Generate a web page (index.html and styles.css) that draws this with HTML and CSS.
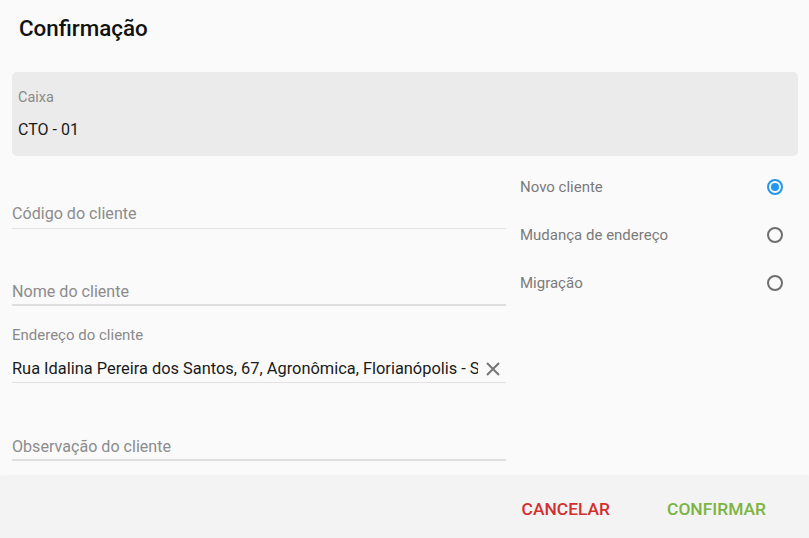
FILE: index.html
```html
<!DOCTYPE html>
<html lang="pt">
<head>
<meta charset="utf-8">
<link rel="stylesheet" href="styles.css">
</head>
<body>
<div class="dialog">
  <h1 class="title">Confirmação</h1>
  <div class="box">
    <div class="box-label">Caixa</div>
    <div class="box-value">CTO - 01</div>
  </div>
  <div class="row">
    <div class="fields">
      <div class="field f1"><div class="input placeholder">Código do cliente</div></div>
      <div class="field f2 thick"><div class="input placeholder">Nome do cliente</div></div>
      <div class="field f3">
        <div class="label">Endereço do cliente</div>
        <div class="input value-row">
          <span class="value">Rua Idalina Pereira dos Santos, 67, Agronômica, Florianópolis - SC, Brasil</span>
          <svg class="clear" width="16" height="16" viewBox="0 0 16 16"><path d="M2 2 L14 14 M14 2 L2 14" stroke="#757575" stroke-width="2" fill="none"/></svg>
        </div>
      </div>
      <div class="field f4 thick"><div class="input placeholder">Observação do cliente</div></div>
    </div>
    <div class="radios">
      <div class="radio-item"><span>Novo cliente</span><span class="radio checked"></span></div>
      <div class="radio-item"><span>Mudança de endereço</span><span class="radio"></span></div>
      <div class="radio-item"><span>Migração</span><span class="radio"></span></div>
    </div>
  </div>
  <div class="actions">
    <button class="btn cancel">CANCELAR</button>
    <button class="btn confirm">CONFIRMAR</button>
  </div>
</div>
</body>
</html>
```
FILE: styles.css
```css
* { box-sizing: border-box; }
html, body { margin: 0; padding: 0; }
body {
  background: #fafafa;
  font-family: Roboto, "Liberation Sans", Arial, sans-serif;
  width: 809px;
  height: 538px;
  overflow: hidden;
}
.dialog {
  display: flex;
  flex-direction: column;
  height: 538px;
}
.title {
  margin: 0;
  padding: 14px 19px 0;
  height: 72px;
  font-size: 22.4px;
  line-height: 28px;
  font-weight: 500;
  color: #111;
}
.box {
  margin: 0 11px 0 12px;
  height: 84px;
  background: #ebebeb;
  border-radius: 5px;
  padding: 17px 6px 0;
}
.box-label {
  font-size: 14.5px;
  line-height: 18px;
  color: #8a8a8a;
}
.box-value {
  margin-top: 14px;
  font-size: 16px;
  line-height: 18px;
  color: #1a1a1a;
}
.row {
  display: flex;
  padding-left: 12px;
  gap: 14px;
}
.fields {
  width: 494px;
  display: flex;
  flex-direction: column;
}
.field {
  display: flex;
  flex-direction: column;
  justify-content: flex-end;
  border-bottom: 1px solid #e2e2e2;
}
.field.thick { border-bottom: 2px solid #dedede; }
.f1 { height: 73px; }
.f2 { height: 77px; }
.f3 { height: 77px; }
.f4 { height: 78px; }
.input {
  height: 28px;
  line-height: 28px;
  font-size: 16.1px;
}
.f2 .input, .f3 .input, .f4 .input { padding-top: 2px; }
.placeholder { color: #8c8c8c; }
.label {
  font-size: 15px;
  line-height: 18px;
  color: #8a8a8a;
  margin-bottom: 10px;
}
.value-row {
  display: flex;
  align-items: center;
}
.value {
  width: 466px;
  line-height: 28px;
  white-space: nowrap;
  overflow: hidden;
  color: #1a1a1a;
  font-size: 16.4px;
}
.clear {
  margin-left: 7px;
  margin-top: 0;
}
.radios {
  flex: 1;
  padding-top: 7.4px;
  padding-right: 26px;
}
.radio-item {
  height: 48px;
  display: flex;
  align-items: center;
  justify-content: space-between;
  font-size: 15px;
  color: #7a7a7a;
}
.radio {
  width: 16px;
  height: 16px;
  border: 2px solid #6e6e6e;
  border-radius: 50%;
  display: flex;
  align-items: center;
  justify-content: center;
}
.radio.checked { border-color: #2196f3; }
.radio.checked::after {
  content: "";
  width: 8px;
  height: 8px;
  border-radius: 50%;
  background: #2196f3;
}
.actions {
  margin-top: auto;
  height: 62px;
  background: #f3f3f3;
  box-shadow: 0 -1px 2px rgba(0,0,0,0.03);
  display: flex;
  align-items: center;
  justify-content: flex-end;
  padding-right: 43px;
  gap: 57px;
}
.btn {
  border: 0;
  background: none;
  padding: 0;
  font-family: Roboto, "Liberation Sans", Arial, sans-serif;
  font-size: 17.4px;
  font-weight: 500;
  line-height: 20px;
  margin-top: 3px;
}
.cancel { color: #d32f2f; }
.confirm { color: #7cb342; }
```
